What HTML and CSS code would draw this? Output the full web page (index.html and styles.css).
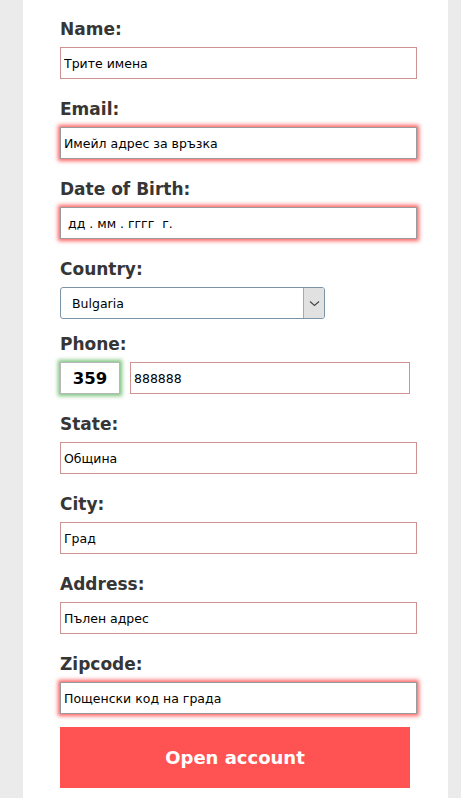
FILE: index.html
```html
<!DOCTYPE html>
<html lang="bg">
<head>
<meta charset="utf-8">
<title>Open account</title>
<link rel="stylesheet" href="styles.css">
</head>
<body>
<main class="panel">
  <form class="form">
    <div class="field">
      <label class="label">Name:</label>
      <input class="input" type="text" value="Трите имена">
    </div>
    <div class="field">
      <label class="label">Email:</label>
      <input class="input input-glow" type="text" value="Имейл адрес за връзка">
    </div>
    <div class="field">
      <label class="label">Date of Birth:</label>
      <input class="input input-glow input-date" type="text" value="дд . мм . гггг  г.">
    </div>
    <div class="field field-select">
      <label class="label">Country:</label>
      <div class="select">
        <span class="select-text">Bulgaria</span>
        <span class="select-btn">
          <svg width="11" height="7" viewBox="0 0 11 7"><path d="M1 1.5 L5.5 5.5 L10 1.5" fill="none" stroke="#444" stroke-width="1.1"/></svg>
        </span>
      </div>
    </div>
    <div class="field">
      <label class="label">Phone:</label>
      <div class="phone-row">
        <input class="code" type="text" value="359">
        <input class="input phone" type="text" value="888888">
      </div>
    </div>
    <div class="field">
      <label class="label">State:</label>
      <input class="input" type="text" value="Община">
    </div>
    <div class="field">
      <label class="label">City:</label>
      <input class="input" type="text" value="Град">
    </div>
    <div class="field">
      <label class="label">Address:</label>
      <input class="input" type="text" value="Пълен адрес">
    </div>
    <div class="field field-last">
      <label class="label">Zipcode:</label>
      <input class="input input-glow" type="text" value="Пощенски код на града">
    </div>
    <button class="submit" type="button">Open account</button>
  </form>
</main>
</body>
</html>
```
FILE: styles.css
```css
html, body {
  margin: 0;
  padding: 0;
  background: #ebebeb;
  height: 100%;
}
body {
  font-family: "DejaVu Sans", Verdana, sans-serif;
  overflow: hidden;
}
.panel {
  margin-left: 23px;
  width: 425px;
  min-height: 100%;
  background: #ffffff;
  padding: 19px 0 0 37px;
  box-sizing: border-box;
}
.form {
  display: flex;
  flex-direction: column;
}
.field {
  display: flex;
  flex-direction: column;
  margin-bottom: 20px;
}
.field-select {
  margin-bottom: 15px;
}
.field-last {
  margin-bottom: 13px;
}
.label {
  font-weight: bold;
  font-size: 17px;
  line-height: 20px;
  color: #363636;
  margin-bottom: 8px;
}
.input {
  box-sizing: border-box;
  width: 357px;
  height: 32px;
  border: 1px solid #cf9292;
  padding: 0 3px;
  font-family: "DejaVu Sans", Verdana, sans-serif;
  font-size: 12.5px;
  color: #000;
  background: #fff;
  outline: none;
}
.input-glow {
  border-color: #9a9a9a;
  box-shadow: 0 0 4px 2px rgba(255, 70, 70, 0.85);
}
.input-date {
  padding-left: 7px;
}
.select {
  box-sizing: border-box;
  width: 265px;
  height: 32px;
  border: 1px solid #7d93a6;
  border-radius: 3px;
  display: flex;
  align-items: stretch;
  background: #fff;
}
.select-text {
  flex: 1;
  display: flex;
  align-items: center;
  padding-left: 11px;
  font-size: 12.5px;
  color: #000;
}
.select-btn {
  width: 20px;
  background: #e1e1e1;
  border-left: 1px solid #a8a8a8;
  display: flex;
  align-items: center;
  justify-content: center;
  border-radius: 0 2px 2px 0;
}
.phone-row {
  display: flex;
  gap: 10px;
}
.code {
  box-sizing: border-box;
  width: 60px;
  height: 32px;
  border: 1px solid #b8b8b8;
  box-shadow: 0 0 4px 2px rgba(90, 180, 90, 0.8);
  text-align: center;
  font-family: "DejaVu Sans", Verdana, sans-serif;
  font-weight: bold;
  font-size: 16.5px;
  color: #000;
  padding: 0;
  outline: none;
}
.phone {
  width: 280px;
}
.submit {
  width: 350px;
  height: 61px;
  border: none;
  background: #ff5353;
  color: #fff;
  font-family: "DejaVu Sans", Verdana, sans-serif;
  font-weight: bold;
  font-size: 18px;
  padding: 0;
  cursor: pointer;
}
```
